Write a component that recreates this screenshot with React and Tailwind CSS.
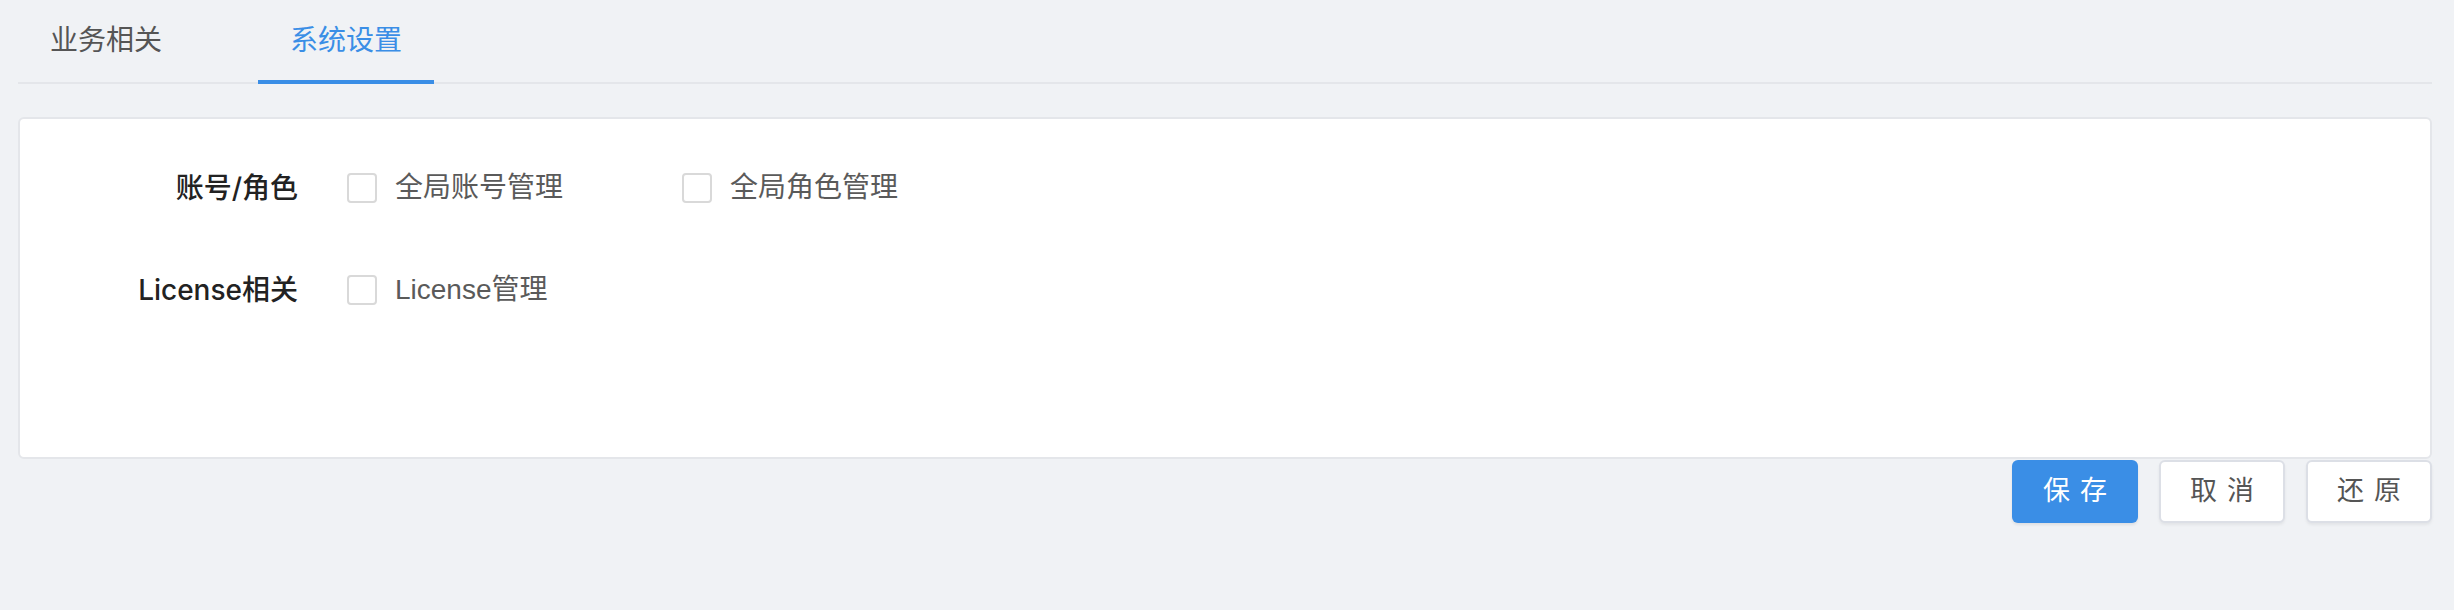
import React from "react";

function Checkbox({ label }) {
  return (
    <label className="flex items-center w-[335px] h-[40px]">
      <span className="w-[30px] h-[30px] border-2 border-[#d9d9d9] rounded-[4px] bg-white shrink-0" />
      <span className="ml-[18px] text-[28px] text-[#5a5a5a] leading-none">{label}</span>
    </label>
  );
}

const labelFont = { fontFamily: 'Inter, "Noto Sans CJK SC", sans-serif' };

export default function App() {
  return (
    <div
      className="w-full min-h-[610px] bg-[#f0f2f5] pl-[18px] pr-[22px]"
      style={{ fontFamily: '"Liberation Sans", "Noto Sans CJK SC", sans-serif' }}
    >
      <div className="flex h-[84px] border-b-2 border-[#e4e6ea] gap-[64px]">
        <div className="relative flex items-center px-[32px] text-[28px] text-[#555555]">业务相关</div>
        <div className="relative flex items-center px-[32px] text-[28px] text-[#3a8ee6]">
          系统设置
          <span className="absolute left-0 right-0 bottom-[-2px] h-[4px] bg-[#3a8ee6]" />
        </div>
      </div>

      <div className="mt-[33px] h-[342px] bg-white border-2 border-[#e4e6ea] rounded-[6px] pt-[49px]">
        <div className="flex items-center h-[40px]">
          <div style={labelFont} className="w-[278px] text-right text-[28px] font-medium text-[#222222] leading-none">账号/角色</div>
          <div className="ml-[49px] flex">
            <Checkbox label="全局账号管理" />
            <Checkbox label="全局角色管理" />
          </div>
        </div>
        <div className="flex items-center h-[40px] mt-[62px]">
          <div style={labelFont} className="w-[278px] text-right text-[28px] font-medium text-[#222222] leading-none">License相关</div>
          <div className="ml-[49px] flex">
            <Checkbox label="License管理" />
          </div>
        </div>
      </div>

      <div className="flex justify-end gap-[21px] mt-[1px]">
        <button className="w-[126px] h-[63px] rounded-[6px] bg-[#3a8ee6] text-white text-[27px] tracking-[10px] pl-[10px] shadow-[0_2px_3px_rgba(0,0,0,0.08)]">
          保存
        </button>
        <button className="w-[126px] h-[63px] rounded-[6px] bg-white border-2 border-[#dcdfe6] text-[#555555] text-[27px] tracking-[10px] pl-[10px] shadow-[0_2px_3px_rgba(0,0,0,0.06)]">
          取消
        </button>
        <button className="w-[126px] h-[63px] rounded-[6px] bg-white border-2 border-[#dcdfe6] text-[#555555] text-[27px] tracking-[10px] pl-[10px] shadow-[0_2px_3px_rgba(0,0,0,0.06)]">
          还原
        </button>
      </div>
    </div>
  );
}
